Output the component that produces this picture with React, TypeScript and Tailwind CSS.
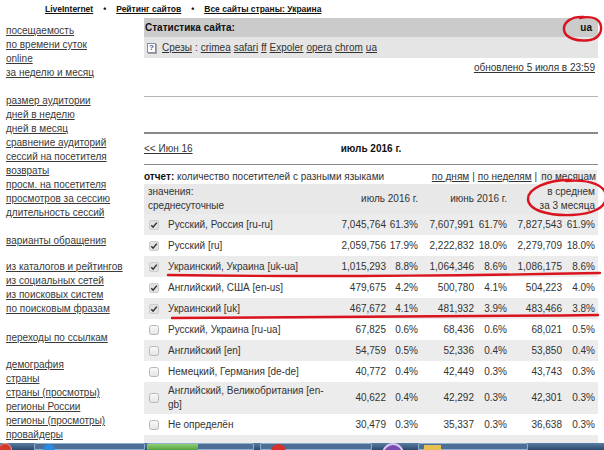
import React from "react";

type Row = [boolean, React.ReactNode, string, string, string, string, string, string];

const rows: Row[] = [
  [true, "Русский, Россия [ru-ru]", "7,045,764", "61.3%", "7,607,991", "61.7%", "7,827,543", "61.9%"],
  [true, "Русский [ru]", "2,059,756", "17.9%", "2,222,832", "18.0%", "2,279,709", "18.0%"],
  [true, "Украинский, Украина [uk-ua]", "1,015,293", "8.8%", "1,064,346", "8.6%", "1,086,175", "8.6%"],
  [true, "Английский, США [en-us]", "479,675", "4.2%", "500,780", "4.1%", "504,223", "4.0%"],
  [true, "Украинский [uk]", "467,672", "4.1%", "481,932", "3.9%", "483,466", "3.8%"],
  [false, "Русский, Украина [ru-ua]", "67,825", "0.6%", "68,436", "0.6%", "68,021", "0.5%"],
  [false, "Английский [en]", "54,759", "0.5%", "52,336", "0.4%", "53,850", "0.4%"],
  [false, "Немецкий, Германия [de-de]", "40,772", "0.4%", "42,449", "0.3%", "43,743", "0.3%"],
  [
    false,
    <>
      Английский, Великобритания [en-
      <br />
      gb]
    </>,
    "40,622",
    "0.4%",
    "42,292",
    "0.3%",
    "42,301",
    "0.3%",
  ],
  [false, "Не определён", "30,479", "0.3%", "35,337", "0.3%", "36,638", "0.3%"],
];

const sideGroups: { mt: string; items: string[] }[] = [
  { mt: "mt-0", items: ["посещаемость", "по времени суток", "online", "за неделю и месяц"] },
  {
    mt: "mt-[14px]",
    items: [
      "размер аудитории",
      "дней в неделю",
      "дней в месяц",
      "сравнение аудиторий",
      "сессий на посетителя",
      "возвраты",
      "просм. на посетителя",
      "просмотров за сессию",
      "длительность сессий",
    ],
  },
  { mt: "mt-[14px]", items: ["варианты обращения"] },
  {
    mt: "mt-[12px]",
    items: ["из каталогов и рейтингов", "из социальных сетей", "из поисковых систем", "по поисковым фразам"],
  },
  { mt: "mt-[15px]", items: ["переходы по ссылкам"] },
  {
    mt: "mt-[13px]",
    items: ["демография", "страны", "страны (просмотры)", "регионы России", "регионы (просмотры)", "провайдеры"],
  },
];

const cols = "grid grid-cols-[20px_168px_54px_32px_56px_33px_55px_36px]";

const Check = ({ on }: { on: boolean }) =>
  on ? (
    <svg width="10" height="10" viewBox="0 0 10 10">
      <rect x="0.5" y="0.5" width="9" height="9" rx="1.5" fill="#e2e2e2" stroke="#cccccc" />
      <path d="M2.3 5.2 L4.1 7.2 L7.8 2.6" fill="none" stroke="#333" strokeWidth="1.5" />
    </svg>
  ) : (
    <svg width="10" height="10" viewBox="0 0 10 10">
      <defs>
        <linearGradient id="cbg" x1="0" y1="0" x2="0" y2="1">
          <stop offset="0" stopColor="#fafafa" />
          <stop offset="1" stopColor="#e4e4e4" />
        </linearGradient>
      </defs>
      <rect x="0.5" y="0.5" width="9" height="9" rx="2" fill="url(#cbg)" stroke="#b8b8b8" />
    </svg>
  );

const L = ({ children }: { children: React.ReactNode }) => (
  <span className="underline text-[#333]">{children}</span>
);

export default function App() {
  return (
    <div className="relative w-[604px] h-[450px] overflow-hidden bg-white text-[#333] font-['Liberation_Sans',Arial,sans-serif] text-[10px] leading-[14px]">
      {/* верхняя навигация */}
      <div className="h-[18px] flex items-center pl-[45px] gap-[10px] text-[8.5px] font-bold text-[#111]">
        <span className="underline">LiveInternet</span>
        <span>•</span>
        <span className="underline">Рейтинг сайтов</span>
        <span>•</span>
        <span className="underline">Все сайты страны: Украина</span>
      </div>

      <div className="flex">
        {/* левое меню */}
        <div className="w-[144px] pl-[6px] pt-[6px] shrink-0">
          {sideGroups.map((g, i) => (
            <div key={i} className={`${g.mt} flex flex-col`}>
              {g.items.map((t) => (
                <span key={t} className="underline text-[#3a3a3a] whitespace-nowrap">
                  {t}
                </span>
              ))}
            </div>
          ))}
        </div>

        {/* основная часть */}
        <div className="w-[454px] flex flex-col">
          <div className="h-[19px] bg-[#cbcbcb] flex items-center justify-between pl-[1px] pr-[6px] font-bold text-[#111]">
            <span>Статистика сайта:</span>
            <span>ua</span>
          </div>
          <div className="h-[21px] bg-[#e5e5e5] flex items-center pl-[3px] gap-[6px]">
            <span className="inline-flex items-center justify-center w-[9px] h-[10px] border border-[#8090a8] bg-white text-[8px] leading-none font-bold text-[#3b5b8a] shadow-[1px_1px_0_#a0a0a0]">
              ?
            </span>
            <span className="flex gap-[3px]">
              <L>Срезы</L>:
              <L>crimea</L>
              <L>safari</L>
              <L>ff</L>
              <L>Expoler</L>
              <L>opera</L>
              <L>chrom</L>
              <L>ua</L>
            </span>
          </div>
          <div className="mt-[3px] flex justify-end pr-[3px]">
            <L>обновлено 5 июля в 23:59</L>
          </div>

          <div className="mt-[21px] h-[38px] border-t border-t-[#b5b5b5] border-b-2 border-b-[#8a8a8a]" />

          <div className="h-[31px] grid grid-cols-[1fr_auto_1fr] items-center border-b border-b-[#8a8a8a]">
            <span>
              <L>&lt;&lt; Июн 16</L>
            </span>
            <span className="font-bold text-[#111]">июль 2016 г.</span>
            <span />
          </div>

          <div className="mt-[5px] flex justify-between pr-[1px]">
            <span>
              <b className="text-[#111]">отчет:</b> количество посетителей с разными языками
            </span>
            <span className="flex gap-[3px]">
              <L>по дням</L>|<L>по неделям</L>|<span className="bg-[#ececec] px-[1px]">по месяцам</span>
            </span>
          </div>

          <div className={`${cols} h-[30px] bg-[#e8e8e8] items-center`}>
            <div className="col-span-2 pl-[4px] flex flex-col">
              <span>значения:</span>
              <span>среднесуточные</span>
            </div>
            <div className="col-span-2 text-right">июль 2016 г.</div>
            <div className="col-span-2 text-right">июнь 2016 г.</div>
            <div className="col-span-2 text-right pr-[3px] flex flex-col">
              <span>в среднем</span>
              <span>за 3 месяца</span>
            </div>
          </div>

          {rows.map((r, i) => (
            <div
              key={i}
              className={`${cols} ${i === 8 ? "h-[32px]" : "h-[21px]"} items-center ${
                i % 2 === 0 ? "bg-[#ececec]" : "bg-white"
              }`}
            >
              <div className="flex justify-center">
                <Check on={r[0]} />
              </div>
              <div className="pl-[4px]">{r[1]}</div>
              <div className="text-right">{r[2]}</div>
              <div className="text-right">{r[3]}</div>
              <div className="text-right">{r[4]}</div>
              <div className="text-right">{r[5]}</div>
              <div className="text-right">{r[6]}</div>
              <div className="text-right pr-[3px]">{r[7]}</div>
            </div>
          ))}
          <div className="h-[21px] bg-[#ececec]" />
        </div>
      </div>

      {/* красные пометки поверх */}
      <svg className="absolute inset-0 pointer-events-none" width="604" height="450">
        <g fill="none" stroke="#d9141e" strokeWidth="2.4" strokeLinecap="round">
          <path d="M584 17 C 572 16, 563 22, 564 30 C 565 38, 577 42, 590 40 C 600 38, 603 30, 600 23 C 597 18, 590 16, 580 18" />
          <path d="M570 180 C 548 180, 528 188, 528 199 C 528 210, 548 216, 572 215 C 592 214, 606 208, 606 197 C 606 186, 592 179, 566 181" />
          <path d="M168 275 C 300 277, 450 276, 600 273" />
          <path d="M172 318 C 300 318, 450 317, 598 315" />
        </g>
      </svg>

      {/* панель задач */}
      <div className="absolute left-0 bottom-0 w-full h-[7px] bg-gradient-to-b from-[#5a7ea6] to-[#2c4a6c] flex items-start">
        <div className="ml-[-2px] w-[14px] h-[14px] rounded-full bg-[#d23a2a] border border-[#f0a090]" />
        <div className="ml-[22px] w-[111px] h-[7px] bg-[#4d6f95] border border-[#8fb0d0] rounded-t-[2px] flex pl-[8px]">
          <div className="w-[12px] h-[12px] rounded-full bg-[#2a8ae0]" />
        </div>
        <div className="ml-[2px] w-[107px] h-[7px] bg-[#4d6f95] border border-[#8fb0d0] rounded-t-[2px] flex">
          <div className="w-[50px] h-[7px] bg-gradient-to-b from-[#8fd070] to-[#4b9a3a]" />
        </div>
        <div className="ml-[6px] w-[112px] h-[7px] bg-[#4d6f95] border border-[#8fb0d0] rounded-t-[2px] flex pl-[10px]">
          <div className="w-[15px] h-[15px] rounded-full bg-[#d8302a]" />
        </div>
        <div className="ml-[10px] w-[22px] h-[22px] rounded-full bg-[#7a4cb0] border-2 border-[#d8c8f0]" />
        <div className="ml-[14px] w-[110px] h-[7px] bg-[#4d6f95] border border-[#8fb0d0] rounded-t-[2px] flex pl-[5px]">
          <div className="w-[17px] h-[6px] mt-[1px] bg-[#e8c050]" />
        </div>
      </div>
    </div>
  );
}
